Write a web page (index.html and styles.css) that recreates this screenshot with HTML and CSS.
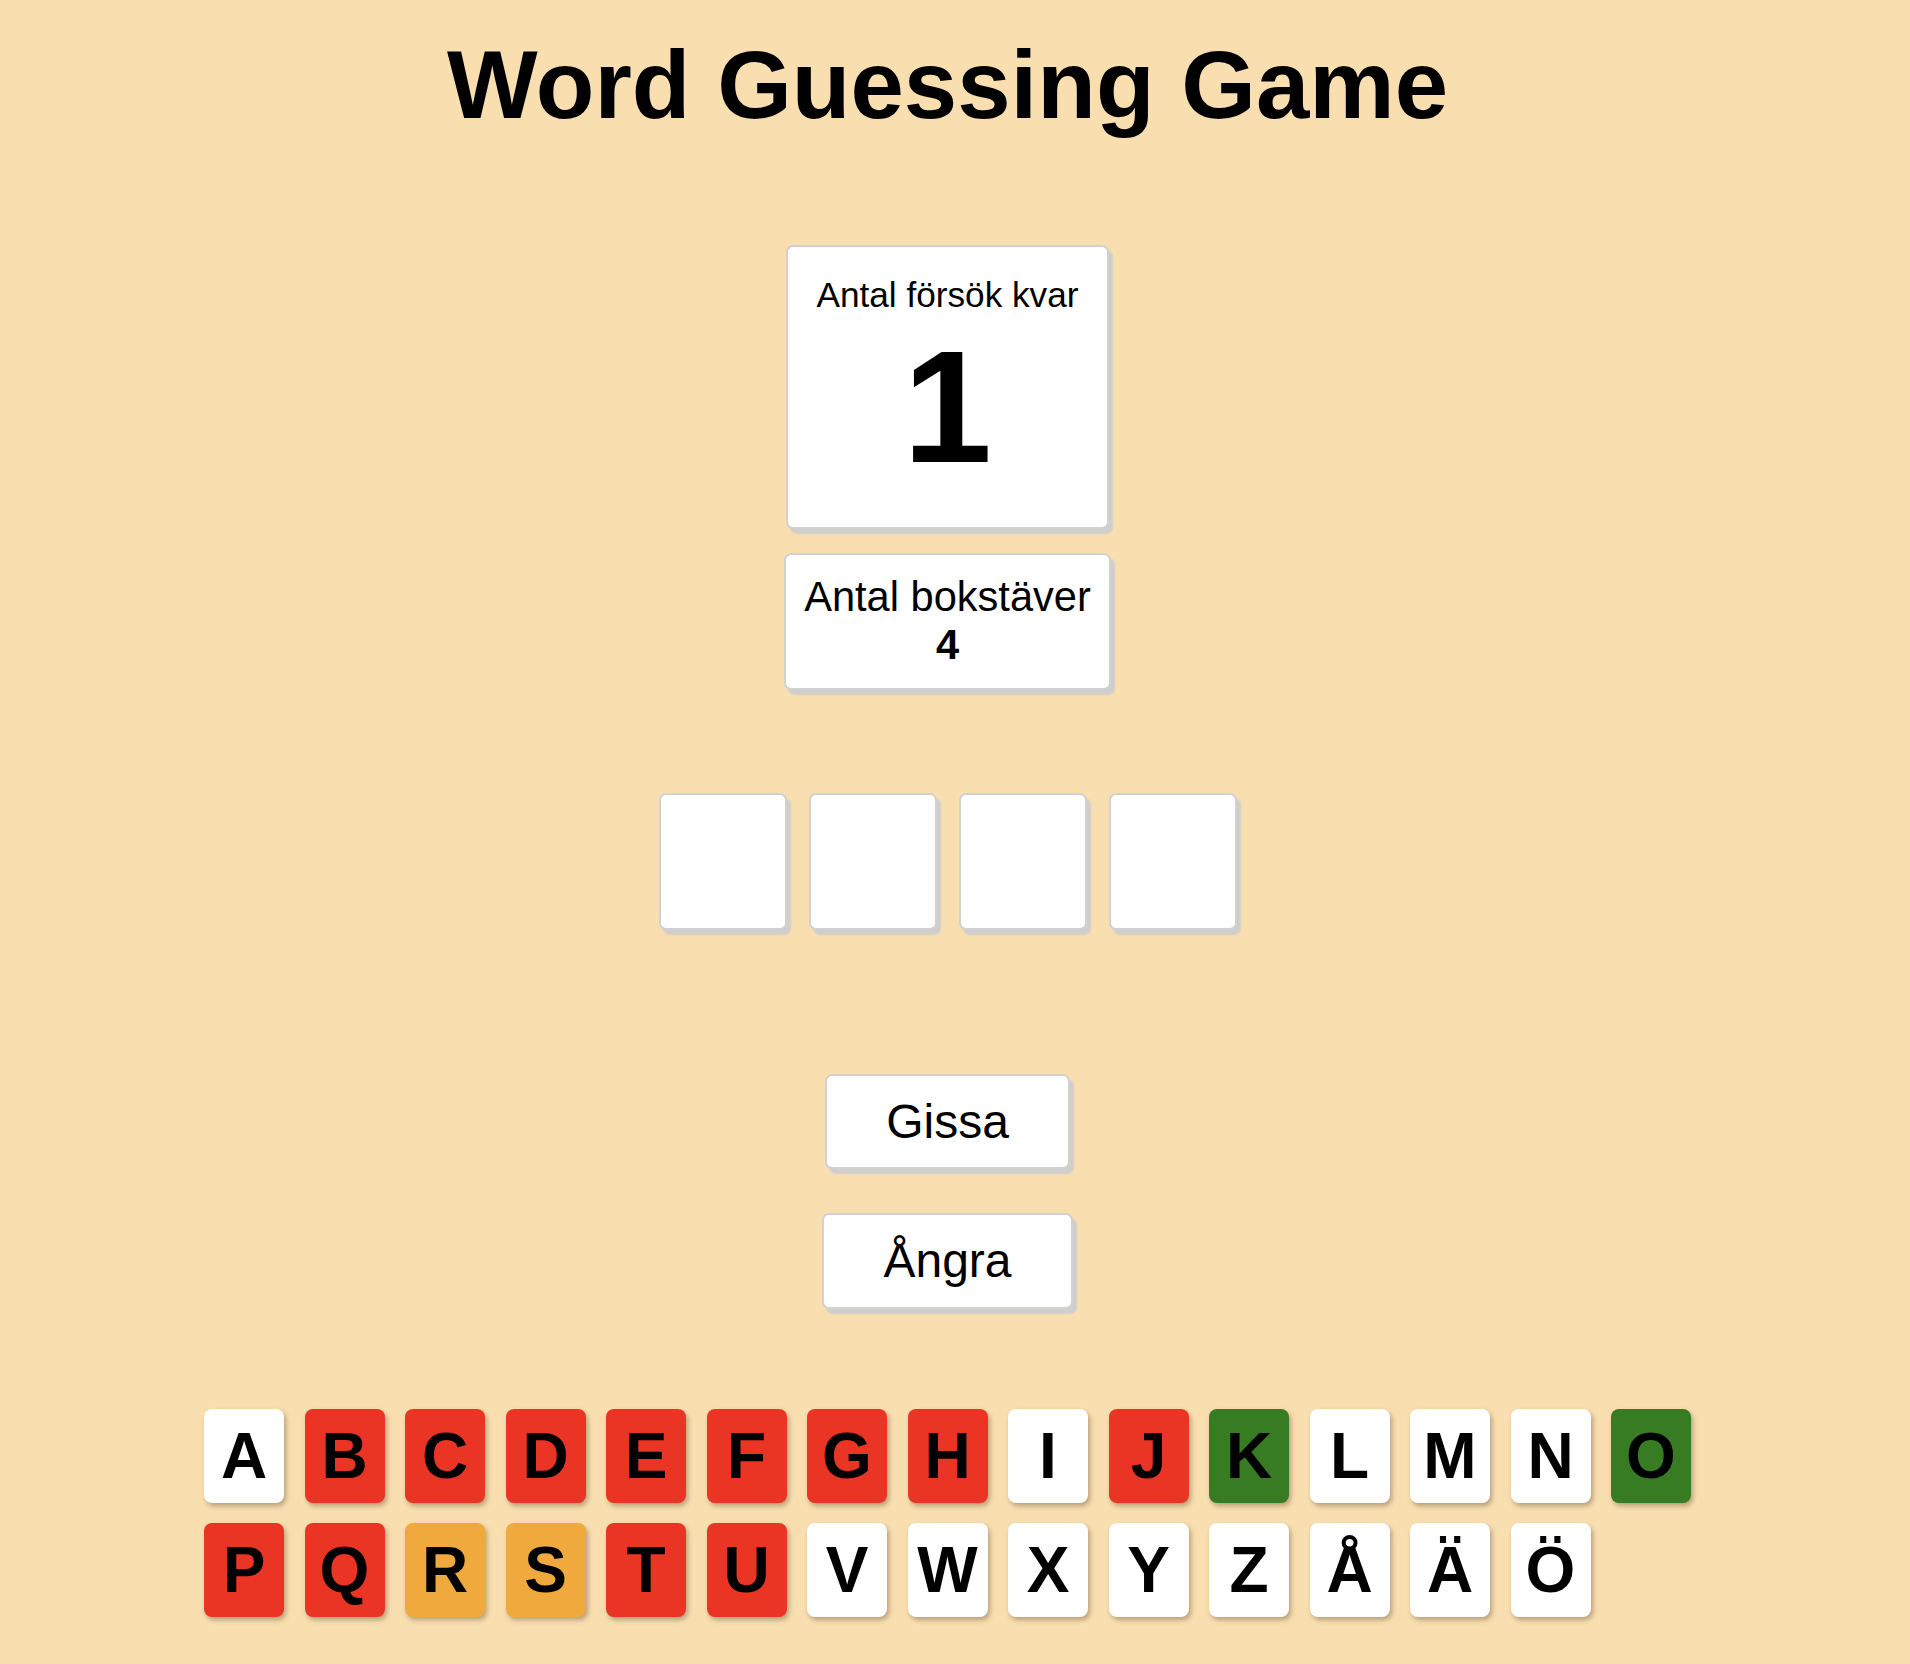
FILE: index.html
```html
<!DOCTYPE html>
<html lang="sv">
<head>
<meta charset="utf-8">
<title>Word Guessing Game</title>
<link rel="stylesheet" href="styles.css">
</head>
<body>
<main class="page">
  <h1 class="title">Word Guessing Game</h1>

  <section class="stats">
    <div class="card card-tries">
      <div class="tries-label">Antal försök kvar</div>
      <div class="tries-value">1</div>
    </div>
    <div class="card card-letters">
      <div class="letters-label">Antal bokstäver</div>
      <div class="letters-value">4</div>
    </div>
  </section>

  <section class="slots">
    <div class="slot"></div>
    <div class="slot"></div>
    <div class="slot"></div>
    <div class="slot"></div>
  </section>

  <section class="actions">
    <button class="btn" type="button">Gissa</button>
    <button class="btn" type="button">Ångra</button>
  </section>

  <section class="keyboard">
    <div class="key">A</div>
    <div class="key key-miss">B</div>
    <div class="key key-miss">C</div>
    <div class="key key-miss">D</div>
    <div class="key key-miss">E</div>
    <div class="key key-miss">F</div>
    <div class="key key-miss">G</div>
    <div class="key key-miss">H</div>
    <div class="key">I</div>
    <div class="key key-miss">J</div>
    <div class="key key-hit">K</div>
    <div class="key">L</div>
    <div class="key">M</div>
    <div class="key">N</div>
    <div class="key key-hit">O</div>
    <div class="key key-miss">P</div>
    <div class="key key-miss">Q</div>
    <div class="key key-near">R</div>
    <div class="key key-near">S</div>
    <div class="key key-miss">T</div>
    <div class="key key-miss">U</div>
    <div class="key">V</div>
    <div class="key">W</div>
    <div class="key">X</div>
    <div class="key">Y</div>
    <div class="key">Z</div>
    <div class="key">Å</div>
    <div class="key">Ä</div>
    <div class="key">Ö</div>
  </section>
</main>
</body>
</html>
```

FILE: styles.css
```css
* {
  box-sizing: border-box;
}

html,
body {
  margin: 0;
  padding: 0;
  background: #f9dfb0;
}

body {
  font-family: "Liberation Sans", Arial, Helvetica, sans-serif;
  color: #000;
}

.page {
  margin-right: 15px;
  padding-top: 30px;
  padding-bottom: 40px;
  display: flex;
  flex-direction: column;
  align-items: center;
}

.title {
  margin: 0;
  font-size: 96px;
  font-weight: 700;
  line-height: normal;
}

.stats {
  margin-top: 105px;
  display: flex;
  flex-direction: column;
  align-items: center;
  gap: 23.5px;
}

.card,
.slot,
.btn {
  background: #fff;
  border: 2px solid #d3d0d0;
  border-radius: 7px;
  box-shadow: 4px 5px 2px #d0cdcd;
}

.card {
  text-align: center;
}

.card-tries {
  padding: 28px;
}

.tries-label {
  font-size: 35.2px;
}

.tries-value {
  font-size: 160px;
  font-weight: 700;
}

.card-letters {
  padding: 18.5px;
}

.letters-label {
  font-size: 41.6px;
}

.letters-value {
  font-size: 41.6px;
  font-weight: 700;
}

.slots {
  margin-top: 103.5px;
  display: flex;
  gap: 22px;
}

.slot {
  width: 128px;
  height: 137px;
}

.actions {
  margin-top: 143.5px;
  display: flex;
  flex-direction: column;
  align-items: center;
  gap: 43.5px;
}

.btn {
  font-family: inherit;
  font-size: 48px;
  color: #000;
  line-height: normal;
  padding: 18.4px 59px;
  margin: 0;
}

.keyboard {
  margin-top: 100.5px;
  display: grid;
  grid-template-columns: repeat(15, 80px);
  column-gap: 20.5px;
  row-gap: 20px;
}

.key {
  height: 94px;
  display: flex;
  align-items: center;
  justify-content: center;
  background: #fff;
  border-radius: 8px;
  box-shadow: 2px 3px 5px rgba(60, 40, 20, 0.35);
  font-size: 64px;
  font-weight: 700;
}

.key-miss {
  background: #ea3424;
}

.key-near {
  background: #f0a93c;
}

.key-hit {
  background: #377b22;
}
```
